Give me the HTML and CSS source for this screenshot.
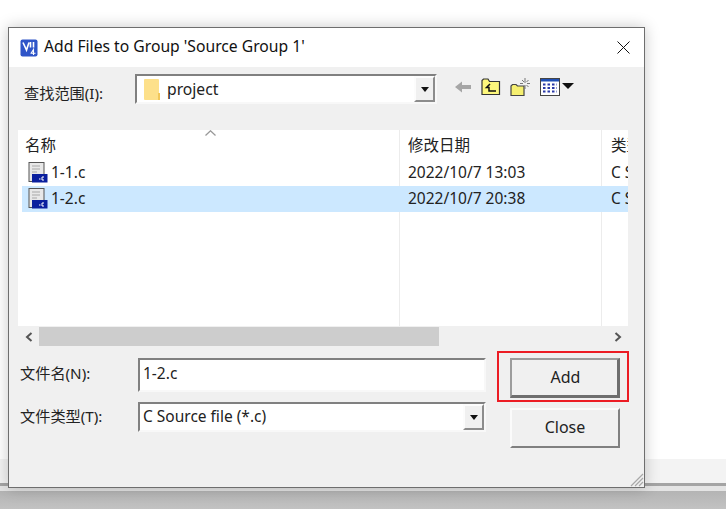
FILE: index.html
```html
<!DOCTYPE html>
<html lang="en">
<head>
    <meta charset="UTF-8">
    <meta name="viewport" content="width=device-width, initial-scale=1.0">
    <title>Add Files to Group</title>
    <link rel="stylesheet" href="styles.css">
</head>
<body>

    <div class="taskbar">
        <div class="strip"></div>
        <div class="edge"></div>
        <div class="shade"></div>
    </div>

    <div class="dialog">
        <div class="titlebar">
            <svg class="app-icon" width="18" height="18" viewBox="0 0 18 18">
                <rect x="0.5" y="0.5" width="17" height="17" rx="2" fill="#2f55c8"/>
                <path d="M3 3.5 L6.5 11 L9 3.5 M10.5 3 V8.5 M13.5 3 V8.5" fill="none" stroke="#fff" stroke-width="1.6"/>
                <path d="M11 14.5 L13.5 10.5 V16 M10.5 14.2 H15.5" fill="none" stroke="#fff" stroke-width="1.1"/>
            </svg>
            <span class="title">Add Files to Group 'Source Group 1'</span>
            <svg class="close-x" width="13" height="13" viewBox="0 0 13 13">
                <path d="M0.5 0.5 L12.5 12.5 M12.5 0.5 L0.5 12.5" stroke="#111" stroke-width="1"/>
            </svg>
        </div>

        <div class="lookin">
            <label class="lookin-label">查找范围(I):</label>
            <div class="combo">
                <svg class="folder" width="16" height="21" viewBox="0 0 16 21">
                    <path d="M0 1 Q0 0 1 0 H14 Q15 0 15 1 V14 H16 V21 H1 Q0 21 0 20 Z" fill="#fde08a"/>
                    <path d="M14 14 H16 V21 H14 Z" fill="#f1c75a"/>
                </svg>
                <span class="combo-text">project</span>
                <div class="drop-btn"><i class="tri"></i></div>
            </div>
            <div class="tools">
                <svg width="17" height="12" viewBox="0 0 17 12">
                    <path d="M0 6 L7 0.5 V4 H16 V8 H7 V11.5 Z" fill="#a6a6a6"/>
                </svg>
                <svg width="20" height="18" viewBox="0 0 20 18">
                    <path d="M1 16.5 V2.5 L2.5 1 H7 L8.5 3.5 H18.5 V16.5 Z" fill="#fdf77c" stroke="#333" stroke-width="1.2"/>
                    <path d="M9 6 L5.5 9.5 H8 V13 H15" fill="none" stroke="#111" stroke-width="1.5"/>
                </svg>
                <svg width="21" height="20" viewBox="0 0 21 20">
                    <path d="M1 18.5 V9 L2.5 7.5 H6 L7.5 9 H14 V18.5 Z" fill="#f5ef70" stroke="#444" stroke-width="1.2"/>
                    <path d="M15 1 V6 M15 8 V12 M10 6.5 H13 M17 6.5 H20 M12 3 L14 5 M18.5 3 L16.5 5 M18.5 10 L16.5 8" stroke="#777" stroke-width="1"/>
                </svg>
                <div class="view-btn">
                    <svg width="20" height="18" viewBox="0 0 20 18">
                        <rect x="0.5" y="0.5" width="19" height="17" fill="#fff" stroke="#444"/>
                        <rect x="1" y="1" width="18" height="2.5" fill="#1f4fb4"/>
                        <path d="M3 6.5 H17 M3 10 H17 M3 13.5 H17" stroke="#2b3aa8" stroke-width="2" stroke-dasharray="2.5 2"/>
                    </svg>
                    <i class="tri tri-big"></i>
                </div>
            </div>
        </div>

        <div class="list">
            <div class="list-head">
                <span class="col-name">名称</span>
                <span class="col-date">修改日期</span>
                <span class="col-type">类型</span>
                <svg class="sort" width="11" height="6" viewBox="0 0 11 6">
                    <path d="M0.5 5.5 L5.5 0.8 L10.5 5.5" fill="none" stroke="#999" stroke-width="1.3"/>
                </svg>
            </div>
            <div class="file-row">
                <span class="col-name">
                    <svg class="file-icon" width="20" height="21" viewBox="0 0 20 21"><use href="#cfile"/></svg>
                    1-1.c
                </span>
                <span class="col-date">2022/10/7 13:03</span>
                <span class="col-type">C Source file</span>
            </div>
            <div class="file-row selected">
                <span class="col-name">
                    <svg class="file-icon" width="20" height="21" viewBox="0 0 20 21"><use href="#cfile"/></svg>
                    1-2.c
                </span>
                <span class="col-date">2022/10/7 20:38</span>
                <span class="col-type">C Source file</span>
            </div>
        </div>

        <div class="hscroll">
            <div class="arrow-cell">
                <svg width="8" height="10" viewBox="0 0 8 10"><path d="M6.5 1 L2 5 L6.5 9" fill="none" stroke="#555" stroke-width="2"/></svg>
            </div>
            <div class="thumb"></div>
            <div class="arrow-cell arrow-right">
                <svg width="8" height="10" viewBox="0 0 8 10"><path d="M1.5 1 L6 5 L1.5 9" fill="none" stroke="#555" stroke-width="2"/></svg>
            </div>
        </div>

        <div class="bottom">
            <div class="fields">
                <div class="field">
                    <label class="field-label name-label">文件名(N):</label>
                    <div class="inset name-box">1-2.c</div>
                </div>
                <div class="field field-type">
                    <label class="field-label type-label">文件类型(T):</label>
                    <div class="inset type-box">
                        <span class="type-text">C Source file (*.c)</span>
                        <div class="drop-btn"><i class="tri"></i></div>
                    </div>
                </div>
            </div>
            <div class="buttons">
                <button class="btn btn-default">Add</button>
                <button class="btn">Close</button>
            </div>
        </div>

        <div class="highlight"></div>

        <svg class="grip" width="14" height="14" viewBox="0 0 14 14">
            <path d="M1 13 L13 1 M5 13 L13 5 M9 13 L13 9" stroke="#a8a8a8" stroke-width="1.2"/>
        </svg>
    </div>

    <svg width="0" height="0" class="defs">
        <symbol id="cfile" viewBox="0 0 20 21">
            <rect x="1" y="0.5" width="15" height="19" fill="#e8e8e8" stroke="#555"/>
            <path d="M4 4 H12 M4 7 H12 M4 10 H9" stroke="#bdbdbd" stroke-width="1.4"/>
            <rect x="4" y="12" width="15.5" height="8.5" fill="#0a1f9e"/>
            <path d="M11 17 h1.5 M16 15 h-2 v3 h2" stroke="#fff" stroke-width="1" fill="none"/>
        </symbol>
    </svg>

</body>
</html>
```

FILE: styles.css
```css
* {
    box-sizing: border-box;
}
html,
body {
    height: 100%;
}
body {
    font-family: "Noto Sans", "Noto Sans CJK SC", sans-serif;
    font-size: 14px;
    color: #222;
    background-color: #fff;
    margin: 0;
    overflow: hidden;
    position: relative;
}
.defs {
    position: absolute;
}
.taskbar {
    height: 100%;
    padding-top: 459px;
}
.strip {
    height: 24px;
    background-color: #f3f3f3;
}
.edge {
    height: 3px;
    background-color: #a4a4a4;
}
.shade {
    height: 23px;
    background: linear-gradient(#e4e4e4 0, #e4e4e4 5px, #b4b4b4 5px, #c2c2c2 100%);
}

/* the window on the desktop */
.dialog {
    position: absolute;
    left: 8px;
    top: 27px;
    width: 637px;
    height: 461px;
    background-color: #f0f0f0;
    border: 1px solid #6e6e6e;
    box-shadow: 0 0 14px rgba(0, 0, 0, 0.22);
}
.titlebar {
    height: 39px;
    background-color: #fff;
    display: flex;
    align-items: center;
    padding: 0 14px 0 11px;
}
.app-icon {
    margin-right: 6px;
}
.title {
    font-size: 15.7px;
    color: #111;
    flex: 1;
    padding-bottom: 3px;
}

.lookin {
    display: flex;
    align-items: center;
    height: 30px;
    margin-top: 7px;
    padding-left: 15px;
}
.lookin-label {
    width: 111px;
    font-size: 15.2px;
    padding-top: 5px;
    white-space: nowrap;
}
.combo {
    width: 302px;
    height: 30px;
    background-color: #fff;
    border: 2px solid;
    border-color: #808080 #f8f8f8 #f8f8f8 #808080;
    display: flex;
    align-items: center;
    padding-left: 7px;
}
.combo-text {
    margin-left: 7px;
    flex: 1;
    font-size: 15.7px;
}
.drop-btn {
    width: 21px;
    align-self: stretch;
    background-color: #f0f0f0;
    border: 2px solid;
    border-color: #fcfcfc #8c8c8c #8c8c8c #fcfcfc;
    display: flex;
    align-items: center;
    justify-content: center;
}
.tri {
    width: 0;
    height: 0;
    border-left: 4px solid transparent;
    border-right: 4px solid transparent;
    border-top: 5px solid #111;
}
.tri-big {
    border-left-width: 6px;
    border-right-width: 6px;
    border-top-width: 6px;
    margin: -3px 0 0 2px;
}
.tools {
    display: flex;
    align-items: center;
    gap: 9px;
    margin-left: 18px;
    padding-bottom: 4px;
}
.view-btn {
    display: flex;
    align-items: center;
}

.list {
    height: 196px;
    margin: 26px 16px 0 9px;
    background-color: #fff;
    background-image: linear-gradient(#ececec, #ececec), linear-gradient(#ececec, #ececec);
    background-size: 1px 100%;
    background-position: 381px 0, 583px 0;
    background-repeat: no-repeat;
    overflow: hidden;
    font-size: 15.5px;
}
.list-head {
    height: 30px;
    display: flex;
    align-items: center;
    position: relative;
    padding-bottom: 2px;
}
.sort {
    position: absolute;
    left: 187px;
    top: 0;
}
.file-row {
    height: 26px;
    display: flex;
    align-items: center;
    padding-bottom: 2px;
}
.selected {
    background-color: #cce8ff;
    margin-left: 4px;
}
.col-name {
    flex: none;
    width: 382px;
    padding-left: 7px;
    display: flex;
    align-items: center;
    gap: 3px;
    white-space: nowrap;
}
.file-row .col-name {
    padding-left: 10px;
}
.file-row.selected .col-name {
    width: 378px;
    padding-left: 6px;
}
.col-date {
    flex: none;
    width: 203px;
    padding-left: 8px;
    white-space: nowrap;
}
.col-type {
    flex: none;
    padding-left: 8px;
    white-space: nowrap;
}

.hscroll {
    height: 19px;
    margin: 1px 16px 0 9px;
    display: flex;
    background-color: #f0f0f0;
}
.arrow-cell {
    width: 21px;
    display: flex;
    align-items: center;
    justify-content: center;
}
.arrow-right {
    margin-left: auto;
}
.thumb {
    width: 400px;
    background-color: #cdcdcd;
}

.bottom {
    display: flex;
    margin: 12px 0 0 11px;
}
.fields {
    width: 466px;
}
.field {
    display: flex;
    align-items: center;
    height: 34px;
}
.field-type {
    height: 30px;
    margin-top: 10px;
}
.field-label {
    width: 118px;
    font-size: 15.2px;
    white-space: nowrap;
}
.name-label {
    padding-bottom: 6px;
}
.type-label {
    padding-bottom: 4px;
}
.inset {
    width: 348px;
    background-color: #fff;
    border: 2px solid;
    border-color: #808080 #f8f8f8 #f8f8f8 #808080;
    font-size: 15.5px;
}
.name-box {
    height: 34px;
    padding: 2px 3px 0;
}
.type-box {
    height: 30px;
    display: flex;
    align-items: center;
    justify-content: space-between;
    padding-left: 3px;
}
.type-text {
    padding-bottom: 2px;
}
.buttons {
    margin-left: 24px;
    display: flex;
    flex-direction: column;
    gap: 10px;
}
.btn {
    width: 110px;
    height: 40px;
    font-family: inherit;
    font-size: 16px;
    color: #222;
    background-color: #f0f0f0;
    border: 2px solid;
    border-color: #fbfbfb #808080 #808080 #fbfbfb;
    padding: 0 0 2px;
}
.btn-default {
    border-color: #9c9c9c #6e6e6e #6e6e6e #9c9c9c;
    border-width: 2px 3px 3px 2px;
    padding-left: 2px;
}

/* red annotation drawn over the shot */
.highlight {
    position: absolute;
    left: 488px;
    top: 323px;
    width: 132px;
    height: 51px;
    border: 2px solid #ec1c24;
}
.grip {
    position: absolute;
    right: 0;
    bottom: 0;
}
```
